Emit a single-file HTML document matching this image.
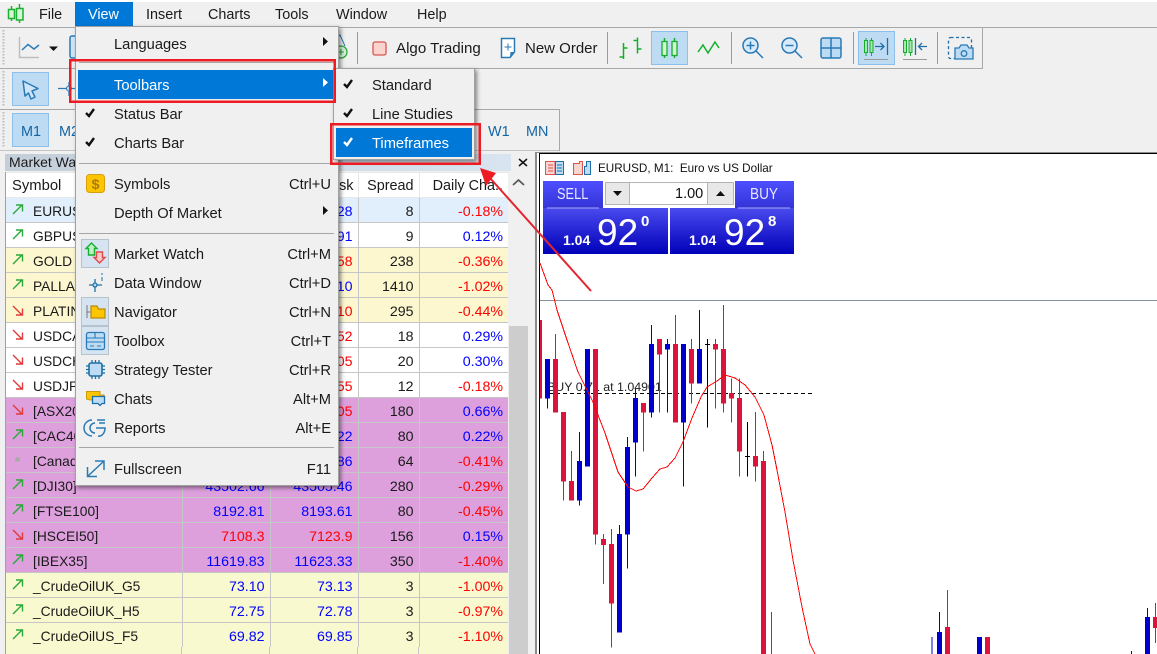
<!DOCTYPE html>
<html><head><meta charset="utf-8"><style>
html,body{margin:0;padding:0;width:1157px;height:654px;overflow:hidden}
#w{position:relative;width:1157px;height:654px;overflow:hidden;background:#f0f0f0;font:14.4px "Liberation Sans",sans-serif;color:#1a1a1a}
.a{position:absolute;white-space:nowrap;line-height:18px}
.b{position:absolute}
table{position:absolute;left:6px;top:172px;border-collapse:collapse;table-layout:fixed;width:502px;font-size:14.2px;background:#fff}
td,th{border:1px solid #c6c6c6;height:20px;padding:4px 5px 0 0;text-align:right;overflow:hidden;white-space:nowrap;font-weight:normal;line-height:18px}
th{border-color:#e8e8e8;height:23px;padding-top:1px;background:#fff;font-size:14.4px}
td:first-child,th:first-child{text-align:left;padding-left:27px;border-left:0;font-size:13.8px}
th:first-child{padding-left:6px;font-size:14.8px}
td:last-child,th:last-child{border-right:0}
.u{color:#00f}.d{color:#f00}
.y td{background:#fdf7d0}.p td{background:#dda0dd}.c td{background:#f9f9d0}.e td{background:#e0effb}
.mi{position:absolute;left:114px;line-height:18px;white-space:nowrap;color:#1a1a1a;font-size:14.7px}
.sc{position:absolute;right:826px;line-height:18px;white-space:nowrap;color:#1a1a1a;font-size:14.7px}
.sep{position:absolute;height:1px;background:#a5a5a5}
.hl{position:absolute;background:#bddcf4;border:1px solid #8cc0ea;box-sizing:border-box}
.tf{position:absolute;color:#1565a5;font-size:14.4px;line-height:18px}
</style></head><body><div id="w">

<!-- Menubar -->
<div class="b" style="left:0;top:0;width:1157px;height:2px;background:#fff"></div>
<div class="b" style="left:0;top:27px;width:1157px;height:1px;background:#a8a8a8"></div>
<div class="b" style="left:75px;top:2px;width:58px;height:24px;background:#0078d7"></div>
<div class="a" style="left:39px;top:6px">File</div>
<div class="a" style="left:88px;top:6px;color:#fff">View</div>
<div class="a" style="left:146px;top:6px">Insert</div>
<div class="a" style="left:208px;top:6px">Charts</div>
<div class="a" style="left:275px;top:6px">Tools</div>
<div class="a" style="left:336px;top:6px">Window</div>
<div class="a" style="left:417px;top:6px">Help</div>

<!-- Toolbars -->
<div class="b" style="left:0;top:68px;width:982px;height:1px;background:#a8a8a8"></div>
<div class="b" style="left:982px;top:28px;width:1px;height:41px;background:#a8a8a8"></div>
<div class="b" style="left:0;top:109px;width:559px;height:1px;background:#a8a8a8"></div>
<div class="b" style="left:559px;top:109px;width:1px;height:42px;background:#a8a8a8"></div>
<div class="b" style="left:0;top:150px;width:559px;height:1px;background:#c4c4c4"></div>
<div class="hl" style="left:12px;top:72px;width:37px;height:34px"></div>
<div class="hl" style="left:12px;top:113px;width:37px;height:34px"></div>
<div class="hl" style="left:651px;top:31px;width:37px;height:34px"></div>
<div class="hl" style="left:858px;top:31px;width:37px;height:34px"></div>
<div class="tf" style="left:21px;top:123px">M1</div>
<div class="tf" style="left:59px;top:123px">M2</div>
<div class="tf" style="left:488px;top:123px">W1</div>
<div class="tf" style="left:526px;top:123px">MN</div>
<div class="a" style="left:396px;top:40px;font-size:15.1px">Algo Trading</div>
<div class="a" style="left:525px;top:40px;font-size:15px">New Order</div>

<!-- Market watch -->
<div class="b" style="left:5px;top:154px;width:506px;height:17px;background:linear-gradient(90deg,#c3ced9,#d8e4f0)"></div>
<div class="a" style="left:9px;top:153px;font-size:14px">Market Watch</div>
<table>
<colgroup><col style="width:176px"><col style="width:88px"><col style="width:88px"><col style="width:61px"><col style="width:89px"></colgroup>
<tr><th>Symbol</th><th>Bid</th><th style="padding-right:4px">Ask</th><th>Spread</th><th style="padding-right:5px">Daily Cha..</th></tr>
<tr class="e"><td>EURUSD</td><td class="u">1.04920</td><td class="u">1.04928</td><td>8</td><td class="d">-0.18%</td></tr>
<tr><td>GBPUSD</td><td class="u">1.26182</td><td class="u">1.26191</td><td>9</td><td class="u">0.12%</td></tr>
<tr class="y"><td>GOLD</td><td class="d">2648.20</td><td class="d">2650.58</td><td>238</td><td class="d">-0.36%</td></tr>
<tr class="y"><td>PALLADIUM</td><td class="u">925.00</td><td class="u">939.10</td><td>1410</td><td class="d">-1.02%</td></tr>
<tr class="y"><td>PLATINUM</td><td class="d">934.15</td><td class="d">937.10</td><td>295</td><td class="d">-0.44%</td></tr>
<tr><td>USDCAD</td><td class="d">1.43234</td><td class="d">1.43252</td><td>18</td><td class="u">0.29%</td></tr>
<tr><td>USDCHF</td><td class="d">0.90185</td><td class="d">0.90205</td><td>20</td><td class="u">0.30%</td></tr>
<tr><td>USDJPY</td><td class="d">157.143</td><td class="d">157.155</td><td>12</td><td class="d">-0.18%</td></tr>
<tr class="p"><td>[ASX200]</td><td class="d">8254.25</td><td class="d">8256.05</td><td>180</td><td class="u">0.66%</td></tr>
<tr class="p"><td>[CAC40]</td><td class="u">7450.42</td><td class="u">7451.22</td><td>80</td><td class="u">0.22%</td></tr>
<tr class="p"><td>[Canada60]</td><td class="u">1456.22</td><td class="u">1456.86</td><td>64</td><td class="d">-0.41%</td></tr>
<tr class="p"><td>[DJI30]</td><td class="u">43502.66</td><td class="u">43505.46</td><td>280</td><td class="d">-0.29%</td></tr>
<tr class="p"><td>[FTSE100]</td><td class="u">8192.81</td><td class="u">8193.61</td><td>80</td><td class="d">-0.45%</td></tr>
<tr class="p"><td>[HSCEI50]</td><td class="d">7108.3</td><td class="d">7123.9</td><td>156</td><td class="u">0.15%</td></tr>
<tr class="p"><td>[IBEX35]</td><td class="u">11619.83</td><td class="u">11623.33</td><td>350</td><td class="d">-1.40%</td></tr>
<tr class="c"><td>_CrudeOilUK_G5</td><td class="u">73.10</td><td class="u">73.13</td><td>3</td><td class="d">-1.00%</td></tr>
<tr class="c"><td>_CrudeOilUK_H5</td><td class="u">72.75</td><td class="u">72.78</td><td>3</td><td class="d">-0.97%</td></tr>
<tr class="c"><td>_CrudeOilUS_F5</td><td class="u">69.82</td><td class="u">69.85</td><td>3</td><td class="d">-1.10%</td></tr>
</table>
<div class="b" style="left:6px;top:647px;width:502px;height:7px;background:#f9f9d0"></div>
<div class="b" style="left:181px;top:647px;width:1px;height:7px;background:#c6c6c6"></div>
<div class="b" style="left:269px;top:647px;width:1px;height:7px;background:#c6c6c6"></div>
<div class="b" style="left:357px;top:647px;width:1px;height:7px;background:#c6c6c6"></div>
<div class="b" style="left:418px;top:647px;width:1px;height:7px;background:#c6c6c6"></div>
<div class="b" style="left:5px;top:172px;width:1px;height:482px;background:#a0a0a0"></div>
<div class="b" style="left:508px;top:172px;width:20px;height:482px;background:#f0f0f0"></div>
<div class="b" style="left:509px;top:326px;width:19px;height:328px;background:#cdcdcd"></div>

<!-- Chart -->
<div class="b" style="left:535px;top:152px;width:622px;height:502px;background:#fff;box-sizing:border-box;border-left:2px solid #8c8c8c;border-top:1px solid #8c8c8c"></div>
<div class="b" style="left:539px;top:153px;width:618px;height:501px;background:#fff;box-sizing:border-box;border-left:1px solid #000;border-top:1px solid #000"></div>
<div class="a" style="left:598px;top:160px;font-size:11.7px;color:#111">EURUSD, M1:&nbsp; Euro vs US Dollar</div>
<div class="a" style="left:547px;top:378px;font-size:12.4px;color:#222">BUY 0.71 at 1.04901</div>

<svg class="b" style="left:0;top:0" width="1157" height="654" viewBox="0 0 1157 654">
<line x1="540" y1="300.5" x2="1157" y2="300.5" stroke="#8494a4"/>
<line x1="549" y1="393.5" x2="814" y2="393.5" stroke="#000" stroke-dasharray="4 3"/>
<g transform="translate(535 290) scale(.33333)" shape-rendering="crispEdges">
<g fill="#dc143c">
<rect x="15" y="90" width="6" height="236"/>
<rect x="60" y="132" width="3" height="236"/><rect x="54" y="207" width="15" height="161"/>
<rect x="84" y="366" width="3" height="266"/><rect x="78" y="366" width="15" height="209"/>
<rect x="108" y="483" width="3" height="149"/><rect x="102" y="573" width="15" height="59"/>
<rect x="180" y="177" width="3" height="587"/><rect x="174" y="177" width="15" height="557"/>
<rect x="204" y="732" width="3" height="150"/><rect x="198" y="747" width="15" height="18"/>
<rect x="228" y="717" width="3" height="356"/><rect x="222" y="762" width="15" height="179"/>
<rect x="324" y="339" width="3" height="146"/><rect x="318" y="339" width="15" height="29"/>
<rect x="372" y="147" width="3" height="221"/><rect x="366" y="147" width="15" height="47"/>
<rect x="420" y="75" width="3" height="323"/><rect x="414" y="162" width="15" height="236"/>
<rect x="468" y="147" width="3" height="194"/><rect x="462" y="177" width="15" height="104"/>
<rect x="540" y="147" width="3" height="209"/><rect x="534" y="162" width="15" height="17"/>
<rect x="564" y="45" width="3" height="323"/><rect x="558" y="177" width="15" height="164"/>
<rect x="588" y="265" width="3" height="133"/><rect x="582" y="309" width="15" height="17"/>
<rect x="612" y="265" width="3" height="295"/><rect x="606" y="324" width="15" height="161"/>
<rect x="660" y="366" width="3" height="209"/><rect x="654" y="498" width="15" height="32"/>
<rect x="684" y="483" width="3" height="100"/><rect x="678" y="513" width="15" height="579"/>
<rect x="708" y="966" width="3" height="126"/>
</g>
<g fill="#0000cd">
<rect x="36" y="207" width="3" height="149"/><rect x="30" y="207" width="15" height="119"/>
<rect x="132" y="426" width="3" height="221"/><rect x="126" y="513" width="15" height="119"/>
<rect x="150" y="177" width="15" height="353"/>
<rect x="252" y="705" width="3" height="323"/><rect x="246" y="732" width="15" height="296"/>
<rect x="276" y="441" width="3" height="395"/><rect x="270" y="471" width="15" height="263"/>
<rect x="300" y="295" width="3" height="265"/><rect x="294" y="324" width="15" height="134"/>
<rect x="348" y="105" width="3" height="278"/><rect x="342" y="162" width="15" height="206"/>
<rect x="396" y="147" width="3" height="221"/><rect x="390" y="162" width="15" height="17"/>
<rect x="444" y="162" width="3" height="428"/><rect x="438" y="162" width="15" height="236"/>
<rect x="492" y="60" width="3" height="221"/><rect x="486" y="177" width="15" height="104"/>
</g>
<g fill="#000">
<rect x="516" y="147" width="3" height="265"/><rect x="510" y="162" width="15" height="3"/>
<rect x="636" y="396" width="3" height="164"/><rect x="630" y="498" width="15" height="3"/>
</g>
</g>
<polyline fill="none" stroke="#f00" stroke-width="1" shape-rendering="crispEdges" points="540,263 548,285 552,290 557,310 567,340 578,372 593,402 605,433 618,472 628,487 636,491 643,489 652,478 660,469 667,467 675,458 683,442 692,418 701,397 707,387 717,381 725,375 735,378 745,385 755,397 764,415 772,445 777,470 785,512 793,560 802,607 810,644 815,654"/>
<g transform="translate(900 590) scale(.33333)" shape-rendering="crispEdges">
<rect x="94" y="141" width="3" height="51" fill="#0000cd"/>
<rect x="117" y="66" width="3" height="126" fill="#0000cd"/><rect x="111" y="126" width="15" height="66" fill="#0000cd"/>
<rect x="141" y="0" width="3" height="192" fill="#dc143c"/><rect x="135" y="111" width="15" height="81" fill="#dc143c"/>
<rect x="231" y="141" width="15" height="51" fill="#0000cd"/>
<rect x="255" y="141" width="15" height="51" fill="#dc143c"/>
<rect x="693" y="183" width="3" height="9" fill="#0000cd"/>
<rect x="741" y="54" width="3" height="138" fill="#0000cd"/><rect x="735" y="81" width="15" height="111" fill="#0000cd"/>
<rect x="765" y="39" width="3" height="120" fill="#dc143c"/><rect x="759" y="81" width="12" height="33" fill="#dc143c"/>
</g>

<!-- one click trading -->
<defs>
<linearGradient id="gb" x1="0" y1="0" x2="0" y2="1"><stop offset="0" stop-color="#4a4aef"/><stop offset="1" stop-color="#0000b8"/></linearGradient>
<linearGradient id="gt" x1="0" y1="0" x2="0" y2="1"><stop offset="0" stop-color="#4e4eff"/><stop offset="1" stop-color="#3434d8"/></linearGradient>
<g id="au"><path d="M-5 5 4 -4M-2 -4H4.5V2.5" fill="none" stroke="#2aa83a" stroke-width="1.4"/></g>
<g id="ad"><path d="M-5 -5 4 4M-2 4H4.5V-2.5" fill="none" stroke="#e03a3a" stroke-width="1.4"/></g>
</defs>
<rect x="543" y="181" width="60" height="27" fill="url(#gt)"/>
<rect x="735" y="181" width="59" height="27" fill="url(#gt)"/>
<rect x="543" y="208" width="125" height="46" fill="url(#gb)"/>
<rect x="670" y="208" width="124" height="46" fill="url(#gb)"/>
<line x1="547" y1="208" x2="599" y2="208" stroke="#a8a8f0"/>
<line x1="738" y1="208" x2="790" y2="208" stroke="#a8a8f0"/>
<rect x="605.500" y="182.500" width="128" height="22" fill="#fff" stroke="#b4b4b4"/>
<rect x="605.500" y="182.500" width="24" height="22" fill="#e8e8e8" stroke="#b4b4b4"/>
<rect x="707.500" y="182.500" width="26" height="22" fill="#e8e8e8" stroke="#b4b4b4"/>
<path d="M613 191H622L617.500 196Z" fill="#111"/><path d="M716 196H725L720.500 191Z" fill="#111"/>

<!-- chart header icons -->
<g fill="none" stroke-width="1">
<rect x="545.500" y="161.500" width="18" height="13" fill="#f9d5d0" stroke="#d9534f"/>
<path d="M555 162V174M548 165H553M548 168H553M548 171H553" stroke="#d9534f"/>
<path d="M555.500 161.500H563.500V174.500H555.500Z" fill="#bddcf4" stroke="#1e6fa8"/>
<path d="M557 165H562M557 168H562M557 171H562" stroke="#1e6fa8"/>
<path d="M573.500 163.500H579.500V161.500H582.500V174.500H573.500Z" fill="#f9d5d0" stroke="#d9534f"/>
<path d="M584.500 166.500H586.500V161.500H590.500V174.500H584.500Z" fill="#bddcf4" stroke="#1e6fa8"/>
</g>

<!-- table arrows -->
<use href="#au" x="18" y="209"/><use href="#au" x="18" y="234"/><use href="#au" x="18" y="259"/><use href="#au" x="18" y="284"/>
<use href="#ad" x="18" y="311"/><use href="#ad" x="18" y="335"/><use href="#ad" x="18" y="360"/><use href="#ad" x="18" y="385"/>
<use href="#ad" x="18" y="410"/><use href="#au" x="18" y="434"/><circle cx="17.500" cy="459.500" r="2.500" fill="#aaa"/>
<use href="#au" x="18" y="484"/><use href="#au" x="18" y="509"/><use href="#ad" x="18" y="535"/><use href="#au" x="18" y="559"/>
<use href="#au" x="18" y="584"/><use href="#au" x="18" y="609"/><use href="#au" x="18" y="634"/>
<path d="M513 185 518.500 180 524 185" fill="none" stroke="#555" stroke-width="1.700"/>
<path d="M519 159 527 166M527 159 519 166" stroke="#111" stroke-width="1.500"/>

<!-- grip -->
<path d="M3.500 30V66M3.500 71V107M3.500 112V148" stroke="#bbb" stroke-width="2" stroke-dasharray="1.500 1.500" fill="none"/>

<!-- app logo -->
<g stroke="#1fb030" stroke-width="1.500"><path d="M11.500 6V21M19.500 4V23" fill="none"/><rect x="8.500" y="9.500" width="6" height="9" fill="#d5f5d8"/><rect x="16.500" y="8.500" width="6.500" height="11.500" fill="#d5f5d8"/></g>

<!-- toolbar icons row1 -->
<path d="M19.500 37V57.500H39" fill="none" stroke="#bdbdbd" stroke-width="1.500"/>
<path d="M22 50 28 44.500 34 49 39 45" fill="none" stroke="#2a7ab5" stroke-width="1.500"/>
<path d="M49 46.500H58L53.500 51Z" fill="#111"/>
<rect x="70" y="36" width="8" height="22" rx="2" fill="#cfe6f8" stroke="#2a7ab5" stroke-width="1.500"/>
<circle cx="341" cy="52" r="6" fill="#d5f0d8" stroke="#2aa83a" stroke-width="1.300"/><path d="M338 52H344M341 49V55" stroke="#2aa83a"/>
<path d="M335 40 340 35 345 46" fill="none" stroke="#2a7ab5"/>
<line x1="357.500" y1="32" x2="357.500" y2="64" stroke="#9a9a9a"/>
<rect x="373" y="42" width="13" height="13" rx="2" fill="#fbd5cd" stroke="#d9534f" stroke-width="1.300"/>
<path d="M501.500 38.500H514.500V52L510 57.500H501.500Z" fill="#fff" stroke="#2a7ab5" stroke-width="1.500"/><path d="M504.500 47H511.500M508 43.500V50.500" stroke="#2a7ab5"/><path d="M510 57 510.500 52H515Z" fill="#2a7ab5"/>
<line x1="607.500" y1="32" x2="607.500" y2="64" stroke="#9a9a9a"/>
<path d="M623.500 43V59M623.500 57H619.500M623.500 48H627.500M637.500 37.500V53.500M637.500 40.500H633.500M637.500 49H641.500" fill="none" stroke="#12b02a" stroke-width="1.500"/>
<path d="M664.500 38V58M674.500 38V58" stroke="#12b02a" stroke-width="1.500"/>
<rect x="662" y="41.500" width="5" height="14" fill="#d5f5d8" stroke="#12b02a" stroke-width="1.300"/>
<rect x="672" y="41.500" width="5" height="14" fill="#d5f5d8" stroke="#12b02a" stroke-width="1.300"/>
<path d="M698 52 703 45 708 53 715 42 719 48" fill="none" stroke="#12b02a" stroke-width="1.500"/>
<line x1="731.500" y1="32" x2="731.500" y2="64" stroke="#9a9a9a"/>
<g fill="none" stroke="#2a7ab5" stroke-width="1.500">
<circle cx="750.500" cy="45.500" r="7.500" fill="#d8ebfa"/><path d="M746.500 45.500H754.500M750.500 41.500V49.500M756 51 763 58"/>
<circle cx="789.500" cy="45.500" r="7.500" fill="#d8ebfa"/><path d="M785.500 45.500H793.500M795 51 802 58"/>
<rect x="821" y="38" width="20" height="20" rx="2" fill="#bddcf4"/><path d="M831 38V58M821 48H841"/>
</g>
<line x1="853.500" y1="32" x2="853.500" y2="64" stroke="#9a9a9a"/>
<g fill="none">
<path d="M866 38V56M871.500 38V56M905 38V56M910.500 38V56" stroke="#12b02a" stroke-width="1"/>
<rect x="864.500" y="40.500" width="3" height="12" fill="#a9e8b0" stroke="#12b02a"/><rect x="870" y="40.500" width="3" height="12" fill="#a9e8b0" stroke="#12b02a"/>
<rect x="903.500" y="40.500" width="3" height="12" fill="#a9e8b0" stroke="#12b02a"/><rect x="909" y="40.500" width="3" height="12" fill="#a9e8b0" stroke="#12b02a"/>
<path d="M875 46.500H884M880.500 43 884 46.500 880.500 50M887.500 38V55" stroke="#1e6fa8" stroke-width="1.300"/>
<path d="M915.500 38V55M918.500 46.500H927M922 43 918.500 46.500 922 50" stroke="#1e6fa8" stroke-width="1.300"/>
<path d="M864 59.500H888M903 59.500H927" stroke="#9a9a9a"/>
</g>
<line x1="937.500" y1="32" x2="937.500" y2="64" stroke="#9a9a9a"/>
<g fill="none" stroke="#2a7ab5" stroke-width="1.300">
<rect x="948.500" y="37.500" width="23" height="21" rx="2" stroke-dasharray="3 2.500" stroke="#1e6fa8"/>
<path d="M955 48H959L961 45H967L969 48H973V59H955Z" fill="#bddcf4"/><circle cx="964" cy="53.500" r="2.800"/>
</g>
<!-- row2 -->
<path d="M23 81 38 88.500 32 91 35 97 31 99 28.500 93 25 96Z" fill="#cfe6f8" stroke="#2a7ab5" stroke-width="1.500" stroke-linejoin="round"/>
<path d="M58 88.500H75M69 82V96" stroke="#2a7ab5" stroke-width="1.300"/><circle cx="69" cy="88.500" r="2.500" fill="#bddcf4" stroke="#2a7ab5"/>
</svg>

<!-- big prices -->
<div class="a" style="left:557px;top:186px;font-size:16px;color:#e8e8ff;transform:scaleX(.8);transform-origin:0 50%">SELL</div>
<div class="a" style="left:750px;top:186px;font-size:16px;color:#e8e8ff;transform:scaleX(.85);transform-origin:0 50%">BUY</div>
<div class="a" style="left:675px;top:185px;font-size:14.5px;color:#111">1.00</div>
<div class="a" style="left:563px;top:231px;font-size:14px;font-weight:bold;color:#fff">1.04</div>
<div class="a" style="left:597px;top:213px;font-size:37px;line-height:40px;color:#fff">92</div>
<div class="a" style="left:641px;top:213px;font-size:15px;font-weight:bold;color:#fff">0</div>
<div class="a" style="left:689px;top:231px;font-size:14px;font-weight:bold;color:#fff">1.04</div>
<div class="a" style="left:724px;top:213px;font-size:37px;line-height:40px;color:#fff">92</div>
<div class="a" style="left:768px;top:213px;font-size:15px;font-weight:bold;color:#fff">8</div>

<!-- Main menu -->
<div class="b" style="left:75px;top:26px;width:264px;height:460px;background:#f0f0f0;box-sizing:border-box;border:1px solid #a0a0a0;box-shadow:2px 2px 4px rgba(0,0,0,.45)"></div>
<div class="b" style="left:78px;top:70px;width:255px;height:29px;background:#0078d7"></div>
<div class="sep" style="left:79px;top:62px;width:255px"></div>
<div class="sep" style="left:79px;top:163px;width:255px"></div>
<div class="sep" style="left:79px;top:233px;width:255px"></div>
<div class="sep" style="left:79px;top:447px;width:255px"></div>
<div class="mi" style="top:36px">Languages</div>
<div class="mi" style="top:77px;color:#fff">Toolbars</div>
<div class="mi" style="top:106px">Status Bar</div>
<div class="mi" style="top:135px">Charts Bar</div>
<div class="mi" style="top:176px">Symbols</div>
<div class="mi" style="top:205px">Depth Of Market</div>
<div class="mi" style="top:246px">Market Watch</div>
<div class="mi" style="top:275px">Data Window</div>
<div class="mi" style="top:304px">Navigator</div>
<div class="mi" style="top:333px">Toolbox</div>
<div class="mi" style="top:362px">Strategy Tester</div>
<div class="mi" style="top:391px">Chats</div>
<div class="mi" style="top:420px">Reports</div>
<div class="mi" style="top:461px">Fullscreen</div>
<div class="sc" style="top:176px">Ctrl+U</div>
<div class="sc" style="top:246px">Ctrl+M</div>
<div class="sc" style="top:275px">Ctrl+D</div>
<div class="sc" style="top:304px">Ctrl+N</div>
<div class="sc" style="top:333px">Ctrl+T</div>
<div class="sc" style="top:362px">Ctrl+R</div>
<div class="sc" style="top:391px">Alt+M</div>
<div class="sc" style="top:420px">Alt+E</div>
<div class="sc" style="top:461px">F11</div>

<!-- Submenu -->
<div class="b" style="left:333px;top:68px;width:142px;height:92px;background:#f0f0f0;box-sizing:border-box;border:1px solid #a0a0a0;box-shadow:2px 2px 4px rgba(0,0,0,.45)"></div>
<div class="b" style="left:336px;top:128px;width:136px;height:29px;background:#0078d7"></div>
<div class="mi" style="left:372px;top:77px">Standard</div>
<div class="mi" style="left:372px;top:106px">Line Studies</div>
<div class="mi" style="left:372px;top:135px;color:#fff">Timeframes</div>

<svg class="b" style="left:0;top:0" width="1157" height="654" viewBox="0 0 1157 654">
<defs><path id="ck" d="M0 4 3 7 8 0" fill="none" stroke-width="2.400"/></defs>
<use href="#ck" x="86" y="109" stroke="#111"/><use href="#ck" x="86" y="138" stroke="#111"/>
<use href="#ck" x="344" y="80" stroke="#111"/><use href="#ck" x="344" y="109" stroke="#111"/><use href="#ck" x="344" y="138" stroke="#fff"/>
<path d="M323 37V46L328 41.500Z" fill="#111"/><path d="M323 78V87L328 82.500Z" fill="#fff"/><path d="M323 206V215L328 210.500Z" fill="#111"/>
<!-- menu icons -->
<rect x="86.500" y="174.500" width="18" height="18" rx="3" fill="#fdc500" stroke="#d79f10"/>
<text x="95.500" y="189" text-anchor="middle" font-family="Liberation Sans" font-size="14" font-weight="bold" fill="#a87a10">$</text>
<rect x="81.500" y="239.500" width="27" height="28" fill="#d6e4f2" stroke="#b8c2cc"/>
<path d="M91.500 243 97 248.500H94.500V255H88.500V248.500H86Z" fill="#bff0c5" stroke="#14b030" stroke-width="1.400"/>
<path d="M99.500 263 105 257.500H102.500V252H96.500V257.500H94Z" fill="#f9c9c5" stroke="#e04a4a" stroke-width="1.400"/>
<g fill="none" stroke="#1e6fa8" stroke-width="1.300"><path d="M89 285H102M95 279V292"/><circle cx="95" cy="285" r="2" fill="#bddcf4"/><path d="M102 273V275M102 277V281" stroke-width="1"/></g>
<rect x="81.500" y="297.500" width="27" height="28" fill="#d6e4f2" stroke="#b8c2cc"/>
<path d="M87 305V318" stroke="#777"/><path d="M87 312H91" stroke="#777"/>
<path d="M91 306H97L98.500 309H105V318H91Z" fill="#fdc500" stroke="#b58a10" stroke-width="1.200"/>
<rect x="81.500" y="326.500" width="27" height="28" fill="#d6e4f2" stroke="#b8c2cc"/>
<rect x="86.500" y="332.500" width="18" height="17" rx="2" fill="#bddcf4" stroke="#2a7ab5" stroke-width="1.300"/>
<path d="M87 338H104M87 342H104M95 333V338M90 346H94M97 346H101" stroke="#2a7ab5" stroke-width="1.100" fill="none"/>
<rect x="89" y="363" width="13" height="13" rx="2" fill="#bddcf4" stroke="#1e6fa8" stroke-width="1.600"/>
<path d="M92 360V363M95.500 360V363M99 360V363M92 376V379M95.500 376V379M99 376V379M86 366H89M86 369.500H89M86 373H89M102 366H105M102 369.500H105M102 373H105" stroke="#1e6fa8" stroke-width="1.300"/>
<path d="M86.500 391.500H100V395H104V400H90L86.500 399Z" fill="#fdc500" stroke="#c89a10"/>
<path d="M92.500 396.500H104.500V403.500H102L100 405.500 98 403.500H92.500Z" fill="#bddcf4" stroke="#1e6fa8" stroke-width="1.300"/>
<g fill="none" stroke="#2a7ab5" stroke-width="1.500"><path d="M92 420A8 8 0 0 0 92 436"/><path d="M95 423A5 5 0 0 0 95 433"/><path d="M97 420H105M99 423H105M96 428H105A6 8 0 0 1 98 436"/></g>
<path d="M88 476 104 461M95 461H104V470M87.500 467V476.500H97" fill="none" stroke="#2a7ab5" stroke-width="1.500"/>
<!-- annotation -->
<g fill="none" stroke="#ed1c24" stroke-width="2.500">
<rect x="70.250" y="60.250" width="264.500" height="41.500"/>
<rect x="331.250" y="124.250" width="148.500" height="39.500"/>
</g>
<line x1="591" y1="291" x2="490" y2="178" stroke="#e3262e" stroke-width="2"/>
<path d="M480 168 496 173 486 186Z" fill="#ed1c24"/>
</svg>
</div></body></html>
